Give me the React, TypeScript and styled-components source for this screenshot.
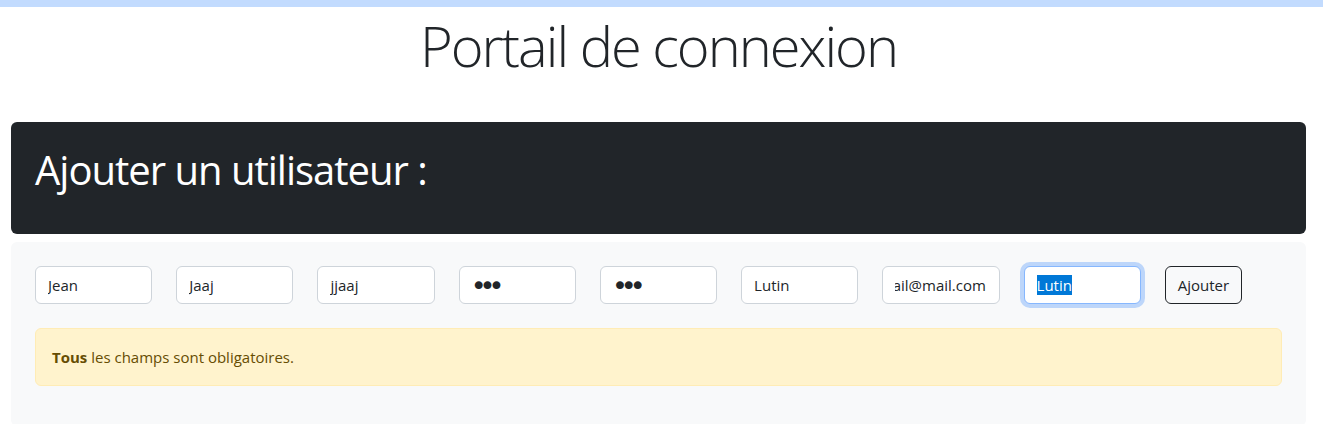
import React, { useEffect, useRef } from "react";
import styled, { createGlobalStyle } from "styled-components";

const GlobalStyle = createGlobalStyle`
  html, body { margin: 0; padding: 0; background: #fff; }
  body {
    font-family: "Open Sans", "Noto Sans", "Liberation Sans", sans-serif;
    color: #212529;
    font-size: 16px;
  }
  * { box-sizing: border-box; }
`;

const TopBar = styled.div`
  height: 7px;
  background: #c2dbfe;
`;

const Page = styled.main`
  padding: 0 17px 0 11px;
`;

const PageTitle = styled.h1`
  margin: 5px 0 43px;
  font-size: 56px;
  font-weight: 300;
  line-height: 1.2;
  letter-spacing: -2px;
  text-align: center;
  color: #212529;
`;

const HeaderCard = styled.section`
  background: #212529;
  border-radius: 6px;
  padding: 24px 24px 40px;
`;

const HeaderTitle = styled.h2`
  margin: 0;
  color: #fff;
  font-size: 40px;
  font-weight: 400;
  line-height: 1.2;
  letter-spacing: -1px;
`;

const FormPanel = styled.form`
  margin-top: 8px;
  background: #f8f9fa;
  border-radius: 6px;
  padding: 24px 24px 24px;
`;

const FieldRow = styled.div`
  display: grid;
  grid-template-columns: repeat(9, 1fr);
  column-gap: 24px;
  align-items: start;
`;

const Field = styled.input<{ $focused?: boolean; $secret?: boolean }>`
  width: 100%;
  height: 38px;
  padding: ${(p) => (p.$secret ? "0 12px 0 11px" : "6px 12px")};
  font-family: ${(p) => (p.$secret ? '"DejaVu Sans", sans-serif' : "inherit")};
  font-size: ${(p) => (p.$secret ? "27px" : "15px")};
  letter-spacing: ${(p) => (p.$secret ? "-7px" : "normal")};
  line-height: 1.2;
  color: #212529;
  background: #fff;
  border: 1px solid ${(p) => (p.$focused ? "#86b7fe" : "#ced4da")};
  border-radius: 6px;
  outline: none;
  box-shadow: ${(p) => (p.$focused ? "0 0 0 4px rgba(13,110,253,0.25)" : "none")};
  &::selection {
    background: #0078d7;
    color: #fff;
  }
`;

const SubmitButton = styled.button`
  justify-self: start;
  height: 38px;
  padding: 6px 12px;
  font-family: inherit;
  font-size: 15px;
  line-height: 1.5;
  color: #212529;
  background: transparent;
  border: 1px solid #212529;
  border-radius: 6px;
  cursor: pointer;
`;

const Alert = styled.div`
  margin: 24px 0 16px;
  padding: 16px 16px;
  background: #fff3cd;
  border: 1px solid #ffecb5;
  border-radius: 6px;
  color: #664d03;
  font-size: 15px;
  line-height: 24px;
  strong { font-weight: 700; }
`;

export default function App() {
  const emailRef = useRef<HTMLInputElement>(null);
  const focusRef = useRef<HTMLInputElement>(null);

  useEffect(() => {
    if (emailRef.current) emailRef.current.scrollLeft = emailRef.current.scrollWidth;
    if (focusRef.current) {
      focusRef.current.focus();
      focusRef.current.select();
    }
  }, []);

  return (
    <>
      <GlobalStyle />
      <TopBar />
      <Page>
        <PageTitle>Portail de connexion</PageTitle>
        <HeaderCard>
          <HeaderTitle>Ajouter un utilisateur :</HeaderTitle>
        </HeaderCard>
        <FormPanel onSubmit={(e) => e.preventDefault()}>
          <FieldRow>
            <Field defaultValue="Jean" />
            <Field defaultValue="Jaaj" />
            <Field defaultValue="jjaaj" />
            <Field type="password" $secret defaultValue="abc" />
            <Field type="password" $secret defaultValue="abc" />
            <Field defaultValue="Lutin" />
            <Field ref={emailRef} defaultValue="email@mail.com" />
            <Field ref={focusRef} $focused defaultValue="Lutin" />
            <SubmitButton type="submit">Ajouter</SubmitButton>
          </FieldRow>
          <Alert>
            <strong>Tous</strong> les champs sont obligatoires.
          </Alert>
        </FormPanel>
      </Page>
    </>
  );
}
